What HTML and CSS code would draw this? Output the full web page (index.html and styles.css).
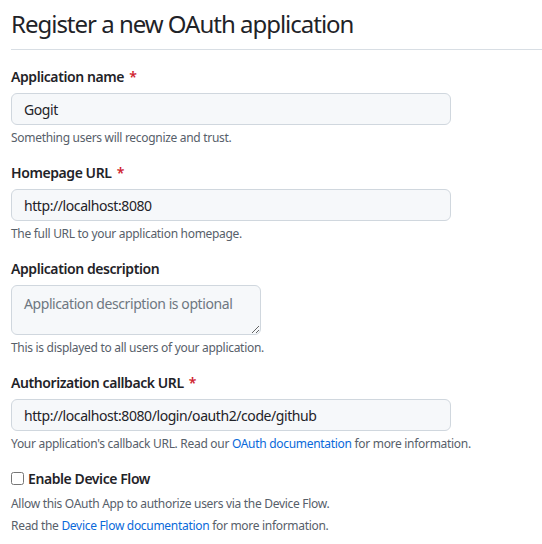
FILE: index.html
```html
<!DOCTYPE html>
<html lang="en">
<head>
<meta charset="utf-8">
<title>Register a new OAuth application</title>
<link rel="stylesheet" href="styles.css">
</head>
<body>
<div class="page">
  <div class="subhead">
    <h2 class="subhead-heading">Register a new OAuth application</h2>
  </div>
  <form class="form">
    <dl class="form-group">
      <dt><label class="label">Application name <span class="req">*</span></label></dt>
      <dd>
        <input class="input input-wide" type="text" value="Gogit">
        <p class="note">Something users will recognize and trust.</p>
      </dd>
    </dl>
    <dl class="form-group">
      <dt><label class="label">Homepage URL <span class="req">*</span></label></dt>
      <dd>
        <input class="input input-wide" type="text" value="http://localhost:8080">
        <p class="note">The full URL to your application homepage.</p>
      </dd>
    </dl>
    <dl class="form-group">
      <dt><label class="label">Application description</label></dt>
      <dd>
        <textarea class="input textarea" placeholder="Application description is optional"></textarea>
        <p class="note">This is displayed to all users of your application.</p>
      </dd>
    </dl>
    <dl class="form-group">
      <dt><label class="label">Authorization callback URL <span class="req">*</span></label></dt>
      <dd>
        <input class="input input-wide" type="text" value="http://localhost:8080/login/oauth2/code/github">
        <p class="note">Your application's callback URL. Read our <a class="link" href="#">OAuth documentation</a> for more information.</p>
      </dd>
    </dl>
    <div class="form-group check-group">
      <label class="label check-label"><input class="checkbox" type="checkbox">Enable Device Flow</label>
      <p class="note note-first">Allow this OAuth App to authorize users via the Device Flow.</p>
      <p class="note">Read the <a class="link" href="#">Device Flow documentation</a> for more information.</p>
    </div>
  </form>
</div>
</body>
</html>
```

FILE: styles.css
```css
* { box-sizing: border-box; }
html, body { margin: 0; padding: 0; background: #ffffff; }
body {
  font-family: "Noto Sans", "Open Sans", sans-serif;
  color: #1f2328;
  font-size: 14px;
  line-height: 1.5;
  letter-spacing: -0.03em;
}
.page { padding-left: 11px; }
.subhead {
  padding-top: 9px;
  padding-bottom: 10px;
  border-bottom: 1px solid #d8dee4;
  margin-bottom: 16px;
}
.subhead-heading {
  margin: 0;
  font-size: 24px;
  font-weight: 400;
  line-height: 30px;
  letter-spacing: -0.042em;
  color: #1f2328;
}
.form-group { margin: 15px 0 0; padding: 0; }
.form-group:first-child { margin-top: 0; }
dt, dd { margin: 0; padding: 0; }
dt { margin-bottom: 6px; }
.label {
  display: block;
  font-size: 14px;
  font-weight: 600;
  line-height: 21px;
  color: #1f2328;
}
.req { color: #cf222e; margin-left: 2px; }
.input {
  display: block;
  font-family: inherit;
  font-size: 14px;
  line-height: 20px;
  letter-spacing: -0.03em;
  padding: 5px 12px;
  color: #1f2328;
  background: #f6f8fa;
  border: 1px solid #d0d7de;
  border-radius: 6px;
  outline: none;
  margin: 0;
}
.input-wide { width: 440px; height: 32px; }
.textarea { width: 250px; height: 50px; padding: 8px 12px; resize: both; }
.textarea::placeholder { color: #6e7781; }
.note {
  margin: 4px 0 0;
  font-size: 12px;
  line-height: 18px;
  letter-spacing: -0.025em;
  color: #57606a;
}
.note-first { margin-top: 6px; }
.link { color: #0969da; text-decoration: none; }
.check-label { display: flex; align-items: center; }
.checkbox { width: 13px; height: 13px; margin: 0 4px 0 0; flex: none; }
```
